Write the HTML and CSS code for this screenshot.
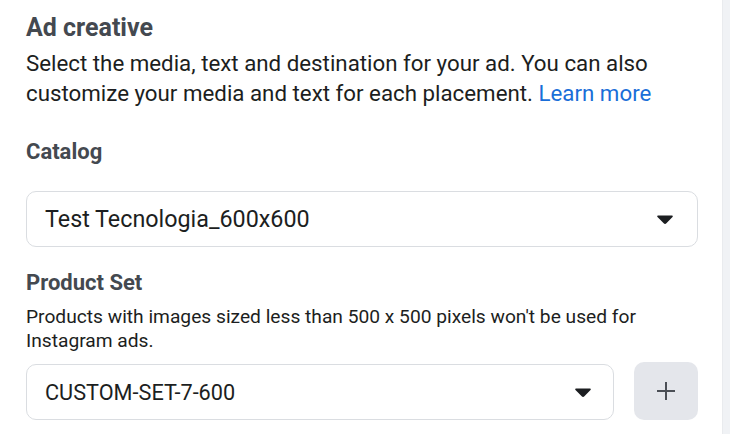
FILE: index.html
```html
<!DOCTYPE html>
<html>
<head>
<meta charset="utf-8">
<link rel="stylesheet" href="styles.css">
</head>
<body>
<div class="page">
  <main class="panel">
    <h1 class="title">Ad creative</h1>
    <p class="intro">Select the media, text and destination for your ad. You can also customize your media and text for each placement. <a class="link" href="#">Learn more</a></p>

    <h2 class="label label-catalog">Catalog</h2>
    <div class="select select-wide">
      <span class="select-text">Test Tecnologia_600x600</span>
      <svg class="caret" width="16" height="9" viewBox="0 0 16 9"><path d="M1.2 0.5h13.6c0.9 0 1.3 1 0.7 1.6l-6.1 6.2c-0.8 0.8-1.9 0.8-2.7 0L0.5 2.1C-0.1 1.5 0.3 0.5 1.2 0.5z" fill="#1c1e21"/></svg>
    </div>

    <h2 class="label label-product">Product Set</h2>
    <p class="hint">Products with images sized less than 500 x 500 pixels won't be used for Instagram ads.</p>
    <div class="row">
      <div class="select select-grow">
        <span class="select-text small">CUSTOM-SET-7-600</span>
        <svg class="caret" width="16" height="9" viewBox="0 0 16 9"><path d="M1.2 0.5h13.6c0.9 0 1.3 1 0.7 1.6l-6.1 6.2c-0.8 0.8-1.9 0.8-2.7 0L0.5 2.1C-0.1 1.5 0.3 0.5 1.2 0.5z" fill="#1c1e21"/></svg>
      </div>
      <button class="add" type="button" aria-label="Add">
        <svg width="20" height="20" viewBox="0 0 20 20"><path d="M10 1v18M1 10h18" stroke="#4b4f56" stroke-width="2" fill="none"/></svg>
      </button>
    </div>
  </main>
  <aside class="side"></aside>
</div>
</body>
</html>
```

FILE: styles.css
```css
* { box-sizing: border-box; }
html, body { margin: 0; padding: 0; }
body {
  font-family: Roboto, "Liberation Sans", Arial, sans-serif;
  color: #1c1e21;
  background: #fff;
  width: 730px;
  height: 434px;
  overflow: hidden;
}
.page {
  display: flex;
  height: 434px;
}
.panel {
  width: 722px;
  padding: 13px 24px 0 26px;
  background: #fff;
}
.side {
  flex: 1;
  background: #f0f2f5;
  border-left: 1px solid #e9ebee;
}
.title {
  margin: 0;
  font-size: 25px;
  line-height: 30px;
  font-weight: 700;
  color: #444950;
}
.intro {
  margin: 5px 0 0;
  font-size: 22.3px;
  line-height: 30px;
  color: #1c1e21;
}
.link { color: #1a6ed8; text-decoration: none; }
.label {
  margin: 0;
  font-size: 22px;
  line-height: 28px;
  font-weight: 700;
  color: #444950;
}
.label-catalog { margin-top: 30px; }
.label-product { margin-top: 22px; }
.select {
  display: flex;
  align-items: center;
  justify-content: space-between;
  height: 56px;
  border: 1px solid #dadde1;
  border-radius: 10px;
  padding: 0 24px 0 18px;
  background: #fff;
}
.select-wide { margin-top: 25px; }
.select-text { font-size: 23.3px; color: #1c1e21; }
.select-text.small { font-size: 21.7px; }
.select-grow { flex: 1; padding-right: 22px; }
.hint {
  margin: 8px 0 0;
  font-size: 19.2px;
  line-height: 24px;
  color: #1c1e21;
}
.row {
  display: flex;
  align-items: flex-end;
  gap: 20px;
  margin-top: 9px;
}
.add {
  width: 64px;
  height: 58px;
  border: 0;
  border-radius: 10px;
  background: #e4e6eb;
  display: flex;
  align-items: center;
  justify-content: center;
  padding: 0;
}
```
